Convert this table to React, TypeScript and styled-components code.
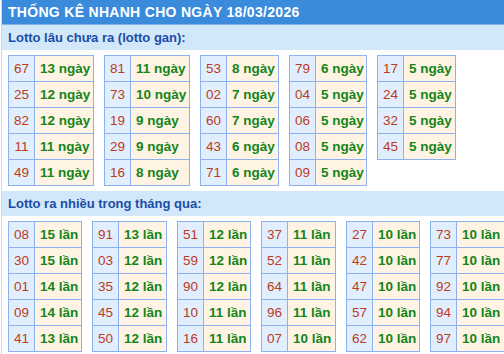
import React from 'react'
import styled, { createGlobalStyle } from 'styled-components'

type Row = [string, string]
type StatTable = { width: number; rows: Row[] }

const ganTables: StatTable[] = [
  { width: 58, rows: [['67', '13 ngày'], ['25', '12 ngày'], ['82', '12 ngày'], ['11', '11 ngày'], ['49', '11 ngày']] },
  { width: 58, rows: [['81', '11 ngày'], ['73', '10 ngày'], ['19', '9 ngày'], ['29', '9 ngày'], ['16', '8 ngày']] },
  { width: 51, rows: [['53', '8 ngày'], ['02', '7 ngày'], ['60', '7 ngày'], ['43', '6 ngày'], ['71', '6 ngày']] },
  { width: 50, rows: [['79', '6 ngày'], ['04', '5 ngày'], ['06', '5 ngày'], ['08', '5 ngày'], ['09', '5 ngày']] },
  { width: 51, rows: [['17', '5 ngày'], ['24', '5 ngày'], ['32', '5 ngày'], ['45', '5 ngày']] },
]

const hotTables: StatTable[] = [
  { width: 46, rows: [['08', '15 lần'], ['30', '15 lần'], ['01', '14 lần'], ['09', '14 lần'], ['41', '13 lần']] },
  { width: 47, rows: [['91', '13 lần'], ['03', '12 lần'], ['35', '12 lần'], ['45', '12 lần'], ['50', '12 lần']] },
  { width: 46, rows: [['51', '12 lần'], ['59', '12 lần'], ['90', '12 lần'], ['10', '11 lần'], ['16', '11 lần']] },
  { width: 47, rows: [['37', '11 lần'], ['52', '11 lần'], ['64', '11 lần'], ['96', '11 lần'], ['07', '10 lần']] },
  { width: 46, rows: [['27', '10 lần'], ['42', '10 lần'], ['47', '10 lần'], ['57', '10 lần'], ['62', '10 lần']] },
  { width: 47, rows: [['73', '10 lần'], ['77', '10 lần'], ['92', '10 lần'], ['94', '10 lần'], ['97', '10 lần']] },
]

const GlobalStyle = createGlobalStyle`
  body {
    margin: 0;
    background: #ffffff;
    font-family: 'Liberation Sans', Arial, sans-serif;
  }
`

const Box = styled.div`
  width: 520px;
  border-left: 1px solid #c9d9ee;
  margin-left: 1px;
`

const Title = styled.div`
  height: 24px;
  line-height: 24px;
  background: #3a8bdc;
  border-bottom: 1px solid #7fb3e8;
  color: #ffffff;
  font-weight: 700;
  font-size: 14px;
  padding-left: 6px;
  letter-spacing: 0.3px;
`

const SubTitle = styled.div`
  height: 25px;
  line-height: 25px;
  background: #d3e7fb;
  color: #1a4ea6;
  font-weight: 700;
  font-size: 13px;
  padding-left: 6px;
`

const TableRow = styled.div`
  display: flex;
  align-items: flex-start;
  gap: 10px;
  padding: 5px 0 5px 6px;
`

const StatGrid = styled.div<{ $valueWidth: number }>`
  display: grid;
  grid-template-columns: 25px ${(p) => p.$valueWidth}px;
  grid-auto-rows: 25px;
  gap: 1px;
  padding: 1px;
  background: #8cb1ee;
  font-size: 13.5px;
  line-height: 25px;
`

const NumCell = styled.div`
  text-align: center;
  background: #e1eefd;
  color: #bb3b22;
`

const ValCell = styled.div`
  padding-left: 5px;
  white-space: nowrap;
  background: #fff4e4;
  color: #13851a;
  font-weight: 700;
`

const Stats = ({ table }: { table: StatTable }) => (
  <StatGrid $valueWidth={table.width}>
    {table.rows.map(([num, val]) => (
      <React.Fragment key={num}>
        <NumCell>{num}</NumCell>
        <ValCell>{val}</ValCell>
      </React.Fragment>
    ))}
  </StatGrid>
)

export default function App() {
  return (
    <>
      <GlobalStyle />
      <Box>
        <Title>THỐNG KÊ NHANH CHO NGÀY 18/03/2026</Title>
        <SubTitle>Lotto lâu chưa ra (lotto gan):</SubTitle>
        <TableRow>
          {ganTables.map((t, i) => (
            <Stats key={i} table={t} />
          ))}
        </TableRow>
        <SubTitle>Lotto ra nhiều trong tháng qua:</SubTitle>
        <TableRow>
          {hotTables.map((t, i) => (
            <Stats key={i} table={t} />
          ))}
        </TableRow>
      </Box>
    </>
  )
}
